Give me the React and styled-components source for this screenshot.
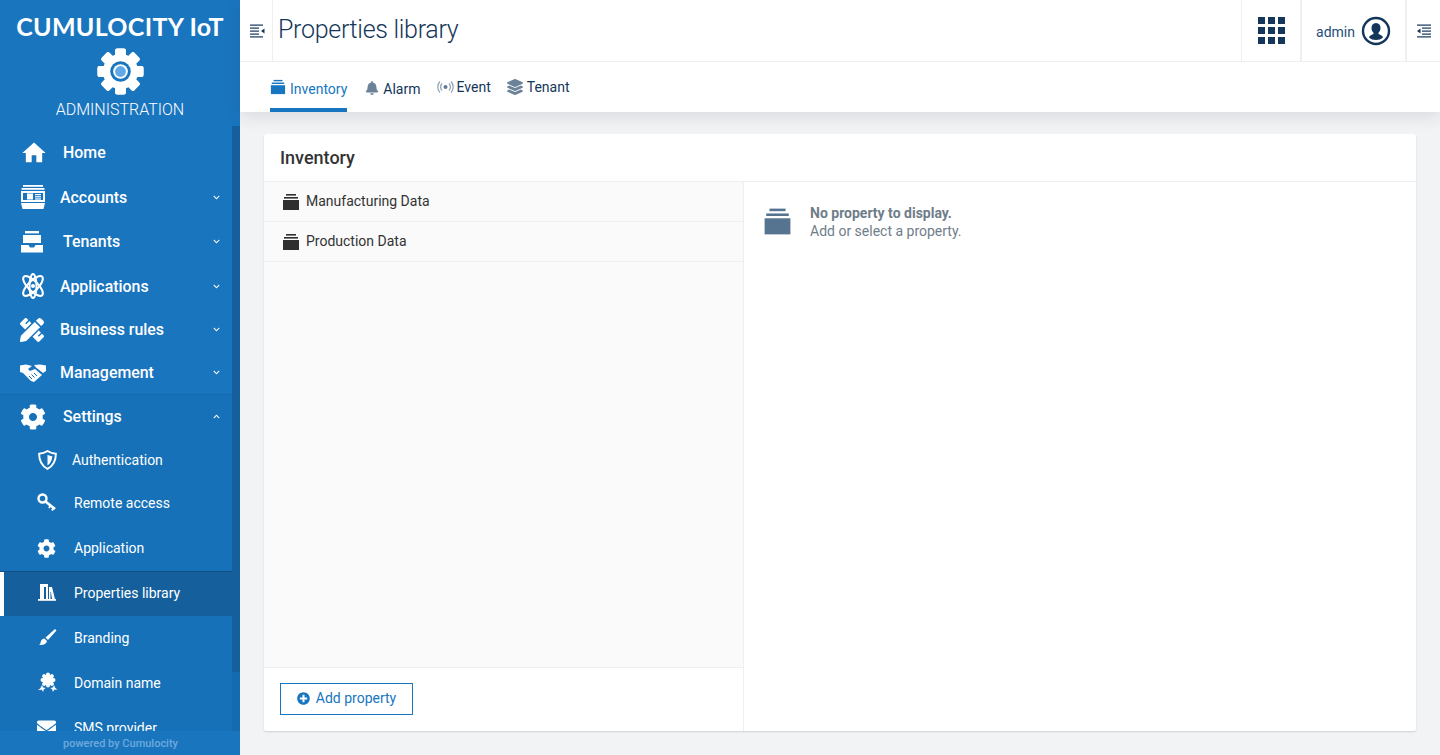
import styled, { createGlobalStyle } from "styled-components";
import { FaCog, FaPencilRuler, FaEnvelope, FaBell, FaLayerGroup, FaPlusCircle, FaChevronDown, FaChevronUp } from "react-icons/fa";
import { MdHome } from "react-icons/md";

const GlobalStyle = createGlobalStyle`
  html, body { margin: 0; height: 100%; overflow: hidden; }
  body { font-family: Roboto, "Liberation Sans", sans-serif; background: #f2f3f5; color: #2c2c2c; }
  * { box-sizing: border-box; }
`;

const StackIcon = ({ size = 18, color = "currentColor" }) => (
  <svg width={size} height={size} viewBox="0 0 18 18" fill={color}>
    <rect x="4" y="1" width="10" height="1.6" />
    <rect x="2" y="4" width="14" height="1.6" />
    <rect x="1" y="7" width="16" height="10" />
  </svg>
);

const AccountsIcon = () => (
  <svg width="26" height="26" viewBox="0 0 26 26" fill="#fff">
    <rect x="3" y="1" width="20" height="1.8" />
    <rect x="1.5" y="4" width="23" height="1.8" />
    <path d="M1 7h24v11H1z M3 9v7h20V9z" fillRule="evenodd" />
    <rect x="7" y="9.5" width="6" height="6" />
    <rect x="15" y="10" width="6" height="1.2" />
    <rect x="15" y="12.2" width="6" height="1.2" />
    <rect x="15" y="14.4" width="6" height="1.2" />
    <path d="M1 19h24l-1.5 6H2.5z" />
  </svg>
);

const TenantsIcon = () => (
  <svg width="24" height="24" viewBox="0 0 24 24" fill="#fff">
    <rect x="5" y="1" width="14" height="2.4" />
    <rect x="3" y="5" width="18" height="8" />
    <path d="M1 15h7.5l1.5 2.5h4l1.5-2.5H23v7.5H1z" />
  </svg>
);

const AtomIcon = () => (
  <svg width="26" height="26" viewBox="0 0 26 26" fill="none" stroke="#fff" strokeWidth="2">
    <ellipse cx="13" cy="13" rx="13" ry="5" transform="rotate(45 13 13)" />
    <ellipse cx="13" cy="13" rx="13" ry="5" transform="rotate(-45 13 13)" />
    <ellipse cx="13" cy="13" rx="12" ry="3.5" transform="rotate(90 13 13)" />
    <circle cx="13" cy="13" r="2" fill="#fff" stroke="none" />
  </svg>
);

const HandshakeIcon = () => (
  <svg width="26" height="20" viewBox="0 0 26 20" fill="#fff">
    <path d="M0 2.500L6 1.500 12 3 8 6 10 8 15 6 22 12 14 19 11 18 3 10 0 9z" />
    <path d="M14 2L20 1.500 26 2.500V8L23 10 16 4.500z" />
    <path d="M9 13l3 3M11.500 11.500l3 3M14 10l3 3" stroke="#1a75bf" strokeWidth="1" fill="none" />
  </svg>
);

const ShieldIcon = () => (
  <svg width="21" height="22" viewBox="0 0 20 20" fill="none">
    <path d="M10 1.500c2.200 1.500 5 2.400 8 2.600 0 6.500-2.400 11.500-8 14.400C4.400 15.600 2 10.600 2 4.100c3-.2 5.800-1.100 8-2.600z" stroke="#fff" strokeWidth="1.800" />
    <path d="M10 5c1.400.8 3 1.300 4.600 1.500-.2 3.800-1.700 6.800-4.600 8.700z" fill="#fff" />
  </svg>
);

const KeyIcon = () => (
  <svg width="20" height="20" viewBox="0 0 20 20" fill="none" stroke="#fff">
    <circle cx="5.500" cy="5.500" r="4" strokeWidth="2.400" />
    <path d="M8.500 8.500L18 16" strokeWidth="2.600" />
    <path d="M13.500 12.500l-1.500 2.500M16.500 15l-1.500 2.500" strokeWidth="2" />
  </svg>
);

const BooksIcon = () => (
  <svg width="20" height="20" viewBox="0 0 20 20" fill="#fff">
    <path d="M3 1h8v15H9V4H7v12H3z" />
    <path d="M12 4h3l3 12h-3l-1-7h-.5v7H12z" />
    <rect x="1" y="16" width="18" height="1.800" />
  </svg>
);

const BrushIcon = () => (
  <svg width="20" height="20" viewBox="0 0 20 20" fill="#fff">
    <path d="M18 1l1.500 1.500-8.500 9.500-2.500-2.500z" />
    <path d="M7.500 10.500l2.500 2.500c-.5 3-3.500 4.500-8 4 1.500-1 1.500-2.500 2-4 .5-1.500 2-2.500 3.500-2.500z" />
  </svg>
);

const AwardIcon = () => (
  <svg width="22" height="22" viewBox="0 0 22 22" fill="#fff">
    {[0, 45, 90, 135, 180, 225, 270, 315].map((a) => (
      <circle key={a} cx="11" cy="2.500" r="2" transform={`rotate(${a} 11 8)`} />
    ))}
    <circle cx="11" cy="8" r="5.500" />
    <path d="M5 13l1.200 2.500 2.500.500-2 1.400-.5 2.600-1.500-2.200L1 18l2.200-1.600z" />
    <path d="M17 13l-1.200 2.500-2.500.500 2 1.400.5 2.600 1.500-2.200 3.200-.3-2.200-1.600z" />
  </svg>
);

const SignalIcon = () => (
  <svg width="17" height="14" viewBox="0 0 17 14" fill="none" stroke="#8da0b3" strokeWidth="1.200">
    <circle cx="8.500" cy="7" r="2" fill="#5f7d99" stroke="none" />
    <path d="M5 3.500a5 5 0 0 0 0 7M12 3.500a5 5 0 0 1 0 7" />
    <path d="M3 1.500a8 8 0 0 0 0 11M14 1.500a8 8 0 0 1 0 11" />
  </svg>
);

// both toggles point left; only the side of the arrow changes
const ToggleIcon = ({ arrowLeft }) => (
  <svg width="15" height="14" viewBox="0 0 15 14" fill="#14365a">
    {arrowLeft ? (
      <>
        <rect x="1" y="0.500" width="14" height="1.200" />
        <rect x="6" y="3.500" width="9" height="1.200" />
        <rect x="6" y="6.500" width="9" height="1.200" />
        <rect x="6" y="9.500" width="9" height="1.200" />
        <rect x="1" y="12.300" width="14" height="1.200" />
        <path d="M4.500 4.500v5L1 7z" />
      </>
    ) : (
      <>
        <rect x="0" y="0.500" width="13" height="1.200" />
        <rect x="0" y="3.500" width="9" height="1.200" />
        <rect x="0" y="6.500" width="9" height="1.200" />
        <rect x="0" y="9.500" width="9" height="1.200" />
        <rect x="0" y="12.300" width="13" height="1.200" />
        <path d="M14.500 4.500v5L11 7z" />
      </>
    )}
  </svg>
);

const LogoGear = () => (
  <svg width="47" height="47" viewBox="0 0 48 48">
    <g fill="#fff">
      {[0, 45, 90, 135, 180, 225, 270, 315].map((a) => (
        <rect key={a} x="18.500" y="0.500" width="11" height="47" rx="2" transform={`rotate(${a} 24 24)`} />
      ))}
      <circle cx="24" cy="24" r="18" />
    </g>
    <circle cx="24" cy="24" r="10.500" fill="#1a75bf" />
    <circle cx="24" cy="24" r="7.500" fill="#fff" />
    <circle cx="24" cy="24" r="5.500" fill="#62a9ea" />
  </svg>
);

const UserIcon = () => (
  <svg width="30" height="30" viewBox="0 0 30 30">
    <circle cx="15" cy="15" r="13" fill="none" stroke="#14365a" strokeWidth="2.400" />
    <path d="M15 7c3 0 4.500 2.200 4.500 5 0 2-.8 3.600-2 4.700v1.300c2.500 1 4 1.700 4.500 3.500-1.700 1.700-4.300 2.500-7 2.500s-5.300-.8-7-2.500c.5-1.800 2-2.500 4.500-3.500v-1.300c-1.200-1.100-2-2.700-2-4.700 0-2.800 1.500-5 4.500-5z" fill="#14365a" />
  </svg>
);

const Layout = styled.div`
  display: flex;
  width: 1440px;
  height: 755px;
`;

const Sidebar = styled.aside`
  position: relative;
  display: flex;
  flex-direction: column;
  width: 240px;
  height: 755px;
  background: #1a75bf;
  color: #fff;
  overflow: hidden;
`;

const Brand = styled.div`
  height: 130px;
  flex: none;
  display: flex;
  flex-direction: column;
  align-items: center;
  padding-top: 11px;
`;

const BrandName = styled.div`
  font-family: Lato, sans-serif;
  font-size: 25px;
  line-height: 30px;
  font-weight: 700;
  white-space: nowrap;
  letter-spacing: 0.300px;
`;

const BrandMark = styled.div`
  height: 50px;
  margin-top: 7px;
`;

const BrandApp = styled.div`
  font-size: 16px;
  font-weight: 300;
  line-height: 20px;
  margin-top: 2px;
`;

const ScrollTrack = styled.div`
  position: absolute;
  top: 126px;
  right: 0;
  width: 8px;
  height: 546px;
  background: #155f9c;
`;

const LowerTrack = styled.div`
  position: absolute;
  top: 672px;
  right: 0;
  width: 8px;
  height: 60px;
  background: #166aae;
`;

const Nav = styled.nav`
  flex: 1;
  width: 232px;
  overflow: hidden;
`;

const SubGroup = styled.div`
  background: #1671b8;
  border-top: 1px solid #1669ac;
`;

const Row = styled.div`
  display: flex;
  align-items: center;
  height: ${(p) => p.$h || 44}px;
  padding: 0 12px 0 ${(p) => p.$pad || 20}px;
  font-size: ${(p) => (p.$sub ? 14 : 15.9)}px;
  font-weight: ${(p) => (p.$sub ? 400 : 500)};
  white-space: nowrap;
  ${(p) => p.$active && `
    background: #155f9c;
    border-top: 1px solid #124f85;
    padding-bottom: 2px;
    box-shadow: inset 4px 0 0 #fff;
  `}
`;

const RowIcon = styled.span`
  display: flex;
  align-items: center;
  flex: none;
  width: ${(p) => p.$w}px;
  height: 28px;
`;

const RowLabel = styled.span`
  flex: 1;
`;

const Chevron = styled.span`
  display: flex;
  font-size: 7px;
`;

const PoweredBy = styled.div`
  position: absolute;
  left: 0;
  bottom: 0;
  width: 240px;
  height: 24px;
  background: #1a75bf;
  color: #6fa9dc;
  font-size: 11px;
  font-weight: 500;
  line-height: 25px;
  padding-left: 63px;
`;

const Main = styled.div`
  flex: 1;
  display: flex;
  flex-direction: column;
  min-width: 0;
`;

const Header = styled.header`
  flex: none;
  background: #fff;
  box-shadow: 0 4px 16px rgba(50, 60, 70, 0.14);
  position: relative;
`;

const TopBar = styled.div`
  display: flex;
  align-items: stretch;
  height: 62px;
  border-bottom: 1px solid #efefef;
  color: #14365a;
`;

const Cell = styled.div`
  display: flex;
  align-items: center;
  justify-content: center;
  width: ${(p) => p.$w}px;
  padding-left: ${(p) => p.$nudge || 0}px;
  border-right: ${(p) => (p.$noRight ? "none" : "1px solid #efefef")};
  border-left: ${(p) => (p.$left ? "1px solid #efefef" : "none")};
`;

const Title = styled.h1`
  flex: 1;
  margin: 0;
  padding-left: 5px;
  font-size: 25px;
  font-weight: 300;
  line-height: 60px;
  letter-spacing: -0.300px;
`;

const AppGrid = styled.div`
  display: grid;
  grid-template-columns: repeat(3, 7px);
  grid-auto-rows: 7px;
  gap: 3px;
`;

const AppDot = styled.span`
  background: #14365a;
`;

const UserName = styled.span`
  font-size: 14px;
  color: #1f4e79;
  margin: 2px 6px 0 0;
`;

const Tabs = styled.div`
  display: flex;
  height: 50px;
  padding-left: 30px;
  gap: 16px;
`;

const Tab = styled.div`
  display: flex;
  align-items: center;
  gap: ${(p) => p.$gap || 4}px;
  height: 50px;
  margin-right: ${(p) => p.$after || 0}px;
  padding-top: ${(p) => (p.$active ? 8 : p.$down ? 4 : 0)}px;
  font-size: 14px;
  color: ${(p) => (p.$active ? "#1776bf" : "#14365a")};
  border-bottom: ${(p) => (p.$active ? "4px solid #1776bf" : "none")};
`;

const TabIcon = styled.span`
  display: flex;
  color: ${(p) => p.$color || "#6b8299"};
  margin-top: ${(p) => p.$lift || 0}px;
`;

const Content = styled.main`
  flex: 1;
  padding: 22px 24px 24px;
  min-height: 0;
`;

const Card = styled.section`
  display: flex;
  flex-direction: column;
  height: 597px;
  background: #fff;
  border-radius: 2px;
  box-shadow: 0 1px 2px rgba(0, 0, 0, 0.14);
`;

const CardTitle = styled.h2`
  flex: none;
  margin: 0;
  height: 48px;
  padding-left: 16px;
  font-size: 18px;
  font-weight: 500;
  line-height: 48px;
  color: #333;
  border-bottom: 1px solid #efefef;
`;

const Split = styled.div`
  flex: 1;
  display: flex;
  min-height: 0;
`;

const ListPane = styled.div`
  display: flex;
  flex-direction: column;
  width: 480px;
  border-right: 1px solid #efefef;
`;

const PropertyList = styled.div`
  flex: 1;
  background: #fafafa;
`;

const PropertyRow = styled.div`
  display: flex;
  align-items: center;
  gap: 6px;
  height: 40px;
  padding-left: 18px;
  font-size: 14px;
  color: #333;
  border-bottom: 1px solid #efefef;
`;

const PropertyLabel = styled.span`
  margin-top: -2px;
`;

const ListFooter = styled.div`
  flex: none;
  height: 64px;
  padding: 15px 16px;
  border-top: 1px solid #efefef;
`;

const AddButton = styled.button`
  display: flex;
  align-items: center;
  justify-content: center;
  gap: 6px;
  width: 133px;
  height: 32px;
  padding: 0 0 2px;
  background: #fff;
  border: 1px solid #1776bf;
  color: #1776bf;
  font-family: inherit;
  font-size: 14px;
`;

const EmptyState = styled.div`
  flex: 1;
  display: flex;
  align-items: flex-start;
  gap: 18px;
  padding: 23px 19px;
`;

const EmptyIcon = styled.div`
  display: flex;
  margin-top: 2px;
`;

const EmptyText = styled.div`
  font-size: 14px;
  line-height: 17px;
  color: #6f7d89;
`;

const EmptyHead = styled.div`
  font-weight: 700;
  margin-bottom: 1px;
`;

const mainItems = [
  { label: "Home", h: 45, w: 43, icon: <MdHome size={28} /> },
  { label: "Accounts", h: 44, w: 40, icon: <AccountsIcon />, more: true },
  { label: "Tenants", h: 45, w: 43, icon: <TenantsIcon />, more: true },
  { label: "Applications", h: 44, w: 40, icon: <AtomIcon />, more: true },
  { label: "Business rules", h: 43, w: 40, icon: <FaPencilRuler size={24} />, more: true },
  { label: "Management", h: 43, w: 40, icon: <HandshakeIcon />, more: true },
];

const subItems = [
  { label: "Authentication", w: 35, h: 43, icon: <ShieldIcon /> },
  { label: "Remote access", w: 37, h: 44, icon: <KeyIcon /> },
  { label: "Application", w: 37, h: 46, icon: <FaCog size={19} /> },
  { label: "Properties library", w: 37, h: 45, active: true, icon: <BooksIcon /> },
  { label: "Branding", w: 37, icon: <BrushIcon /> },
  { label: "Domain name", w: 37, h: 45, icon: <AwardIcon /> },
  { label: "SMS provider", w: 37, h: 45, icon: <FaEnvelope size={19} /> },
];

const App = () => {
  return (
    <Layout>
      <GlobalStyle />
      <Sidebar>
        <Brand>
          <BrandName>CUMULOCITY IoT</BrandName>
          <BrandMark><LogoGear /></BrandMark>
          <BrandApp>ADMINISTRATION</BrandApp>
        </Brand>
        <ScrollTrack />
        <LowerTrack />
        <Nav>
          {mainItems.map((item) => (
            <Row key={item.label} $h={item.h}>
              <RowIcon $w={item.w}>{item.icon}</RowIcon>
              <RowLabel>{item.label}</RowLabel>
              {item.more && <Chevron><FaChevronDown /></Chevron>}
            </Row>
          ))}
          <SubGroup>
            <Row $h={43}>
              <RowIcon $w={43}><FaCog size={26} /></RowIcon>
              <RowLabel>Settings</RowLabel>
              <Chevron><FaChevronUp /></Chevron>
            </Row>
            {subItems.map((item) => (
              <Row key={item.label} $sub $pad={37} $h={item.h} $active={item.active}>
                <RowIcon $w={item.w}>{item.icon}</RowIcon>
                <RowLabel>{item.label}</RowLabel>
              </Row>
            ))}
          </SubGroup>
        </Nav>
        <PoweredBy>powered by Cumulocity</PoweredBy>
      </Sidebar>
      <Main>
        <Header>
          <TopBar>
            <Cell $w={33} $nudge={2}><ToggleIcon /></Cell>
            <Title>Properties library</Title>
            <Cell $w={60} $left>
              <AppGrid>
                {Array.from({ length: 9 }, (_, i) => <AppDot key={i} />)}
              </AppGrid>
            </Cell>
            <Cell $w={105} $left>
              <UserName>admin</UserName>
              <UserIcon />
            </Cell>
            <Cell $w={34} $left $noRight><ToggleIcon arrowLeft /></Cell>
          </TopBar>
          <Tabs>
            <Tab $active $gap={4} $after={2}>
              <TabIcon $color="#1776bf" $lift={-4}><StackIcon size={16} /></TabIcon>
              Inventory
            </Tab>
            <Tab $down $gap={4}><TabIcon $lift={-3}><FaBell size={14} /></TabIcon>Alarm</Tab>
            <Tab $gap={3}><TabIcon><SignalIcon /></TabIcon>Event</Tab>
            <Tab><TabIcon><FaLayerGroup size={16} /></TabIcon>Tenant</Tab>
          </Tabs>
        </Header>
        <Content>
          <Card>
            <CardTitle>Inventory</CardTitle>
            <Split>
              <ListPane>
                <PropertyList>
                  <PropertyRow><StackIcon color="#2f2f2f" /><PropertyLabel>Manufacturing Data</PropertyLabel></PropertyRow>
                  <PropertyRow><StackIcon color="#2f2f2f" /><PropertyLabel>Production Data</PropertyLabel></PropertyRow>
                </PropertyList>
                <ListFooter>
                  <AddButton><FaPlusCircle size={13} />Add property</AddButton>
                </ListFooter>
              </ListPane>
              <EmptyState>
                <EmptyIcon><StackIcon size={29} color="#56748f" /></EmptyIcon>
                <EmptyText>
                  <EmptyHead>No property to display.</EmptyHead>
                  Add or select a property.
                </EmptyText>
              </EmptyState>
            </Split>
          </Card>
        </Content>
      </Main>
    </Layout>
  );
};

export default App;
